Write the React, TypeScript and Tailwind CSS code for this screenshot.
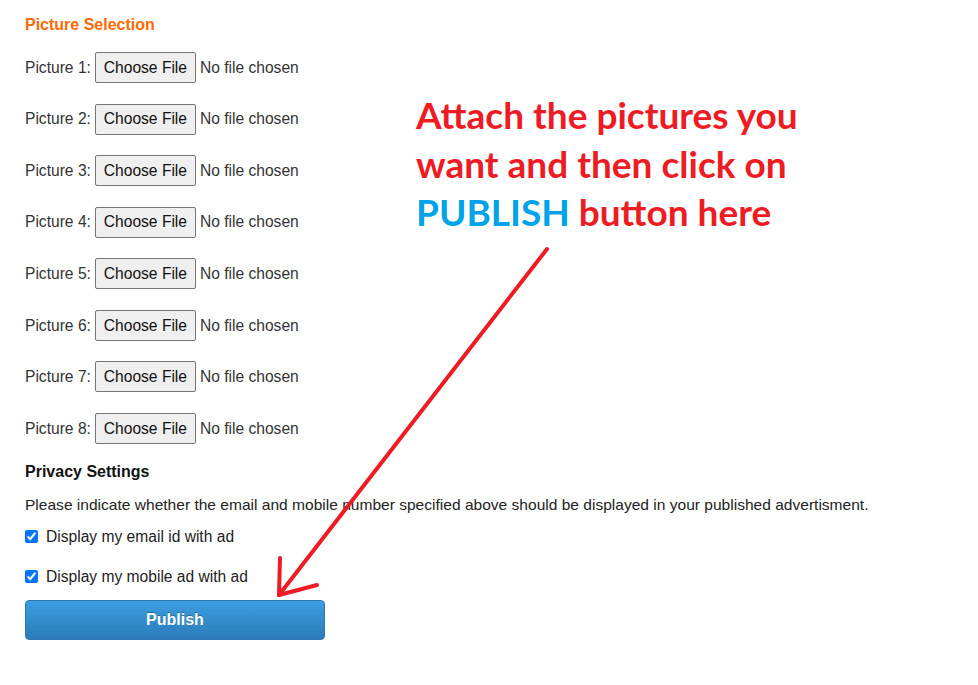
import React from "react";

const rows = [1, 2, 3, 4, 5, 6, 7, 8];

export default function App() {
  return (
    <div
      className="relative w-[978px] h-[685px] bg-white overflow-hidden"
      style={{ fontFamily: '"Liberation Sans", Arial, sans-serif' }}
    >
      <div className="pl-[25px] pt-[16px] flex flex-col">
        <h2 className="text-[16px] leading-[18px] font-bold text-[#ff6a00]">Picture Selection</h2>
        <div className="mt-[18px] flex flex-col gap-[20.57px]">
          {rows.map((n) => (
            <div key={n} className="flex items-center h-[31px] text-[15.6px] text-[#333]">
              <span>Picture {n}:</span>
              <span className="ml-[4px] h-[31px] w-[101px] flex items-center justify-center border border-[#767676] rounded-[2px] bg-[#efefef] text-[#111]">
                Choose File
              </span>
              <span className="ml-[4px]">No file chosen</span>
            </div>
          ))}
        </div>
        <h3 className="mt-[19px] text-[16px] leading-[18px] font-bold text-[#111]">Privacy Settings</h3>
        <p className="mt-[15px] text-[15.55px] leading-[18px] text-[#222]">
          Please indicate whether the email and mobile number specified above should be displayed in your published advertisment.
        </p>
        <label className="mt-[14px] flex items-center h-[18px] text-[15.6px] text-[#222]">
          <input type="checkbox" defaultChecked className="m-0 w-[13px] h-[13px] accent-[#0075ff]" />
          <span className="ml-[8px]">Display my email id with ad</span>
        </label>
        <label className="mt-[22px] flex items-center h-[18px] text-[15.6px] text-[#222]">
          <input type="checkbox" defaultChecked className="m-0 w-[13px] h-[13px] accent-[#0075ff]" />
          <span className="ml-[8px]">Display my mobile ad with ad</span>
        </label>
        <button className="mt-[14px] w-[300px] h-[40px] rounded-[4px] bg-gradient-to-b from-[#3c9ee0] to-[#2b7bb9] border border-[#2a78b4] text-white font-bold text-[16px] [text-shadow:0_-1px_0_rgba(0,0,0,0.3)]">
          Publish
        </button>
      </div>

      <div
        className="absolute left-[416px] top-[91px] text-[37px] leading-[48.5px] font-bold text-[#ed1c24]"
        style={{ fontFamily: 'Lato, "Open Sans", sans-serif' }}
      >
        <div>Attach the pictures you</div>
        <div>want and then click on</div>
        <div>
          <span className="text-[#00a2e8]">PUBLISH</span> button here
        </div>
      </div>

      <svg className="absolute left-0 top-0" width="978" height="685" viewBox="0 0 978 685">
        <g stroke="#ed1c24" strokeWidth="4" strokeLinecap="round" fill="none">
          <line x1="547" y1="249" x2="279" y2="595" />
          <line x1="279" y1="595" x2="280" y2="558" />
          <line x1="279" y1="595" x2="317" y2="585" />
        </g>
      </svg>
    </div>
  );
}
